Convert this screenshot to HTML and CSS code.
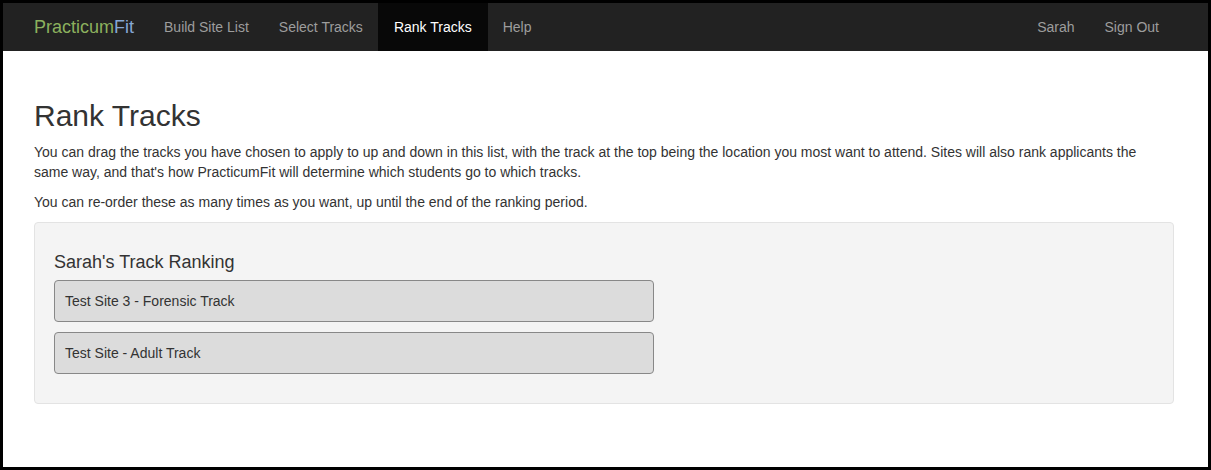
FILE: index.html
```html
<!DOCTYPE html>
<html lang="en">
<head>
    <meta charset="UTF-8">
    <meta name="viewport" content="width=device-width, initial-scale=1.0">
    <title>Rank Tracks - PracticumFit</title>
    <link rel="stylesheet" href="styles.css">
</head>
<body>
    <div class="frame">
        <nav class="navbar">
            <a href="#" class="brand"><span class="brand-a">Practicum</span><span class="brand-b">Fit</span></a>
            <ul class="nav">
                <li><a href="#">Build Site List</a></li>
                <li><a href="#">Select Tracks</a></li>
                <li class="active"><a href="#">Rank Tracks</a></li>
                <li><a href="#">Help</a></li>
            </ul>
            <ul class="nav nav-right">
                <li><a href="#">Sarah</a></li>
                <li><a href="#">Sign Out</a></li>
            </ul>
        </nav>

        <div class="main">
            <h2>Rank Tracks</h2>
            <p>You can drag the tracks you have chosen to apply to up and down in this list, with the track at the top being the location you most want to attend. Sites will also rank applicants the same way, and that's how PracticumFit will determine which students go to which tracks.</p>
            <p>You can re-order these as many times as you want, up until the end of the ranking period.</p>

            <div class="well">
                <h4>Sarah's Track Ranking</h4>
                <ul class="track-list">
                    <li class="track">Test Site 3 - Forensic Track</li>
                    <li class="track">Test Site - Adult Track</li>
                </ul>
            </div>
        </div>
    </div>
</body>
</html>
```

FILE: styles.css
```css
html, body {
    margin: 0;
    padding: 0;
    height: 100%;
}
body {
    font-family: "Liberation Sans", Arial, sans-serif;
    font-size: 14px;
    line-height: 20px;
    color: #333;
    background: #000;
}
.frame {
    box-sizing: border-box;
    height: 470px;
    border: 3px solid #000;
    background: #fff;
}
.navbar {
    display: flex;
    align-items: stretch;
    height: 48px;
    padding: 0 34px 0 16px;
    background-color: #222;
}
.brand {
    display: flex;
    align-items: center;
    padding: 0 15px;
    font-size: 18px;
    text-decoration: none;
}
.brand-a {
    color: #8cb15e;
}
.brand-b {
    color: #86a8d6;
}
.nav {
    display: flex;
    margin: 0;
    padding: 0;
    list-style: none;
}
.nav-right {
    margin-left: auto;
}
.nav li a {
    display: flex;
    align-items: center;
    height: 100%;
    padding: 0 15px;
    color: #9d9d9d;
    text-decoration: none;
}
.nav li.active a {
    padding: 0 16px;
    color: #fff;
    background-color: #080808;
}
.main {
    padding: 48px 34px 0 31px;
}
h2 {
    margin: 0 0 10px;
    font-size: 30px;
    font-weight: normal;
    line-height: 33px;
}
p {
    margin: 0 0 10px;
}
.well {
    padding: 19px;
    background-color: #f4f4f4;
    border: 1px solid #e3e3e3;
    border-radius: 4px;
}
h4 {
    margin: 10px 0 8px;
    font-size: 18px;
    font-weight: normal;
    line-height: 20px;
}
.track-list {
    margin: 0;
    padding: 0;
    list-style: none;
}
.track {
    width: 578px;
    margin-bottom: 10px;
    padding: 10px;
    background-color: #dcdcdc;
    border: 1px solid #888;
    border-radius: 4px;
}
```
